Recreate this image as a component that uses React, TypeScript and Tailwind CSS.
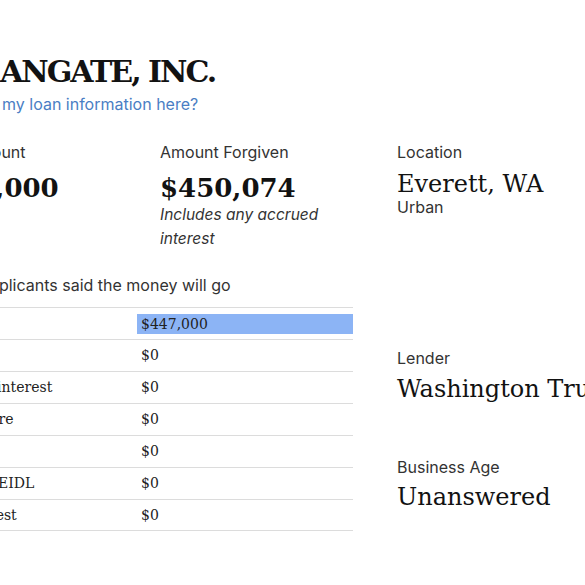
const rows = [
  { label: "Payroll", value: "$447,000", highlight: true },
  { label: "Utilities", value: "$0" },
  { label: "Mortgage interest", value: "$0" },
  { label: "Health care", value: "$0", nudge: true },
  { label: "Rent", value: "$0" },
  { label: "Refinance EIDL", value: "$0" },
  { label: "Debt interest", value: "$0" },
]

const sans = "font-['Inter',sans-serif]"
const serif = "font-['DejaVu_Serif',serif]"

export default function App() {
  return (
    <div className="w-[585px] h-[585px] overflow-hidden bg-white text-[#121212]">
      <div className="-ml-[70px] w-[760px]">
        {/* Header */}
        <h1 className={`${serif} pt-[54px] pl-[70px] text-[30px] leading-[36px] font-bold tracking-[-2px] whitespace-nowrap`}>
          ANGATE, INC.
        </h1>
        <a className={`${sans} block mt-[4px] pl-[72px] text-[16px] leading-[20px] text-[#4a7ec4]`}>
          my loan information here?
        </a>

        <div className="flex mt-[28px]">
          {/* Left section */}
          <div className="w-[423px] shrink-0">
            <div className="flex">
              <div className="w-[230px] shrink-0 whitespace-nowrap">
                <div className={`${sans} -ml-[5px] text-[16px] leading-[20px] text-[#333]`}>Loan Amount</div>
                <div className={`${serif} -ml-[7px] mt-[10px] text-[26px] leading-[32px] font-bold`}>$447,000</div>
              </div>
              <div className="flex-1">
                <div className={`${sans} text-[16px] leading-[20px] text-[#333]`}>Amount Forgiven</div>
                <div className={`${serif} mt-[10px] text-[26px] leading-[32px] font-bold`}>$450,074</div>
                <p className={`${sans} -mt-[1px] text-[15.5px] leading-[24px] italic text-[#333]`}>
                  Includes any accrued
                  <br />
                  interest
                </p>
              </div>
            </div>

            <div className={`${sans} -ml-[4px] mt-[24px] text-[16px] leading-[20px] text-[#333] whitespace-nowrap`}>
              Where applicants said the money will go
            </div>

            <div className={`${serif} mt-[12px] text-[14px] text-[#222]`}>
              {rows.map((r) => (
                <div key={r.label} className="flex items-center h-[32px] border-t border-[#dcdcdc] last:border-b">
                  <div className={r.nudge ? "w-[207px] shrink-0 whitespace-nowrap" : "-ml-[7px] w-[214px] shrink-0 whitespace-nowrap"}>
                    {r.label}
                  </div>
                  <div className="flex-1">
                    <span className={r.highlight ? "block h-[20px] leading-[20px] pl-[4px] bg-[#8cb4f5]" : "block pl-[4px]"}>
                      {r.value}
                    </span>
                  </div>
                </div>
              ))}
            </div>
          </div>

          {/* Right section */}
          <div className="ml-[44px] flex-1 whitespace-nowrap">
            <div className={`${sans} text-[16px] leading-[20px] text-[#333]`}>Location</div>
            <div className={`${serif} mt-[8px] text-[24px] leading-[28px]`}>Everett, WA</div>
            <div className={`${sans} text-[16px] leading-[18px] text-[#333]`}>Urban</div>

            <div className={`${sans} mt-[132px] text-[16px] leading-[20px] text-[#333]`}>Lender</div>
            <div className={`${serif} mt-[7px] text-[24px] leading-[28px]`}>Washington Trust Bank</div>

            <div className={`${sans} mt-[54px] text-[16px] leading-[20px] text-[#333]`}>Business Age</div>
            <div className={`${serif} mt-[6px] text-[24px] leading-[28px]`}>Unanswered</div>
          </div>
        </div>
      </div>
    </div>
  )
}
